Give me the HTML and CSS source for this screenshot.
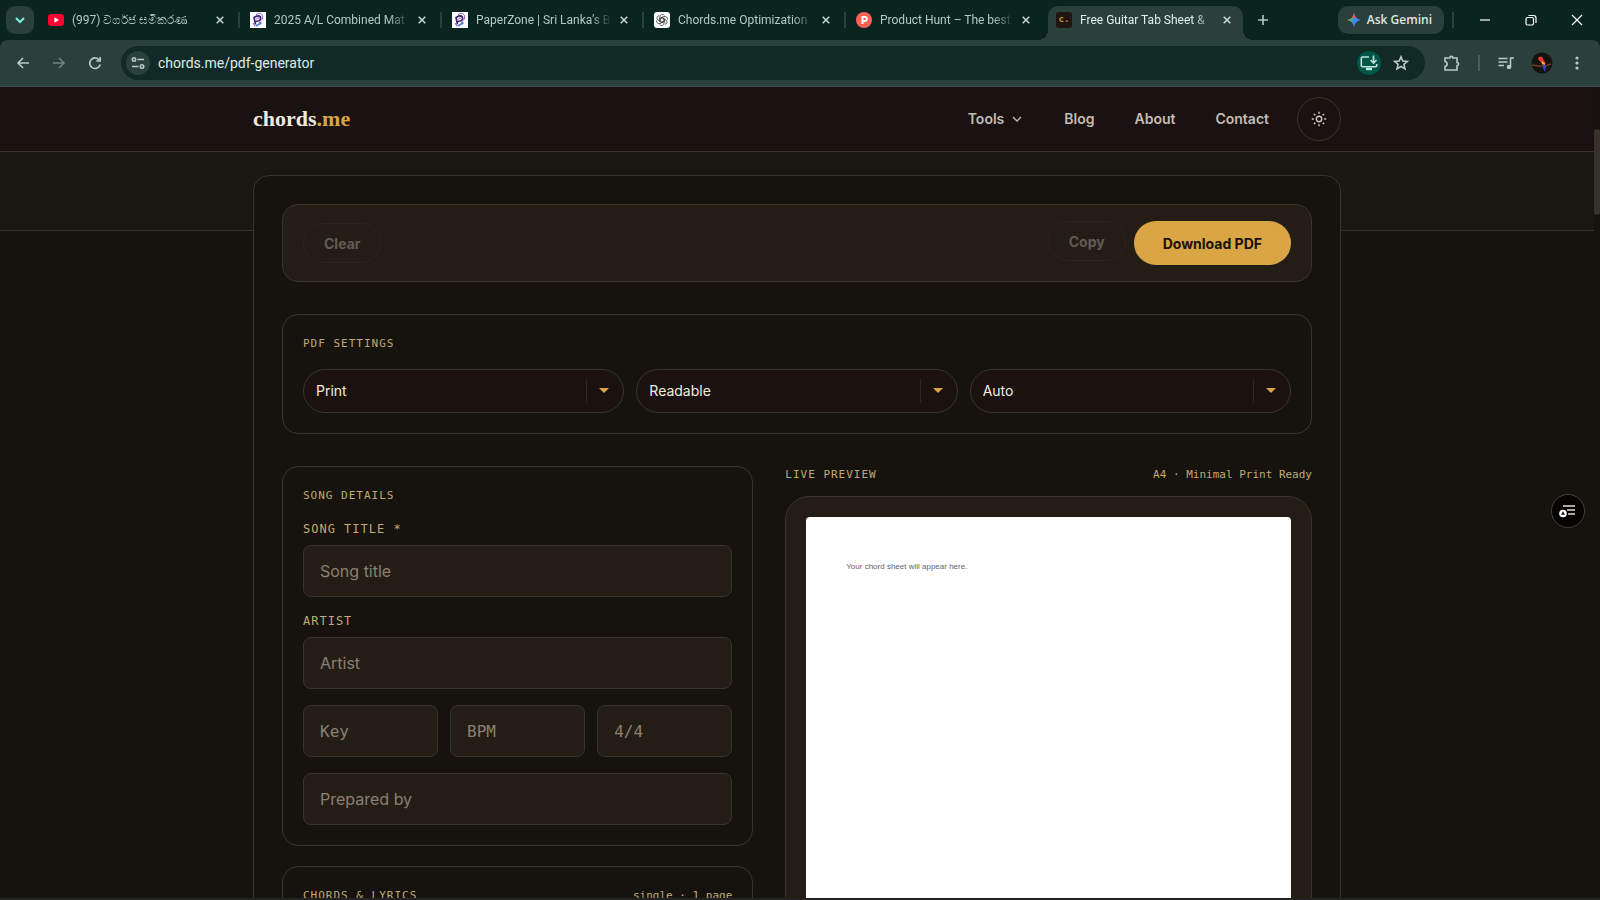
FILE: index.html
```html
<!DOCTYPE html>
<html lang="en">
<head>
<meta charset="utf-8">
<meta name="viewport" content="width=device-width, initial-scale=1">
<title>Free Guitar Tab Sheet &amp; PDF Generator</title>
<link rel="stylesheet" href="styles.css">
</head>
<body>
<div class="browser">
  <div class="tab-strip">
    <button class="tab-search" aria-label="Search tabs"><svg width="12" height="12" viewBox="0 0 12 12"><path d="M2 4l4 4 4-4" fill="none" stroke="#7ff0de" stroke-width="2"/></svg></button>
    <div class="tabs">
      <div class="tab">
        <svg class="favicon" viewBox="0 0 16 16"><rect y="2" width="16" height="12" rx="3" fill="#ff0033"/><path d="M6.4 5.3v5.4L11 8z" fill="#fff"/></svg>
        <span class="tab-title">(997) වර්ගජ සමීකරණ</span>
        <button class="tab-close" aria-label="Close tab"><svg width="8" height="8" viewBox="0 0 8 8"><path d="M.7.7l6.6 6.6M7.3.7L.7 7.3"/></svg></button>
      </div>
      <div class="tab">
        <svg class="favicon" viewBox="0 0 16 16"><rect width="16" height="16" fill="#fff"/><path d="M5.500 12.500L4 5.600c3-2.600 6.500-2.200 6.600.6.1 2.200-2.200 3.200-4.800 3.100" fill="none" stroke="#3a2478" stroke-width="1.700"/><path d="M6 2.800c3-3 7.500-1 6.500 3.400-.5 2-2 3-3 3.600l1 2.500M6 7.500c1-1.500 2-1.700 3-1.300M3 11l2 3.500" fill="none" stroke="#8a4fc0"/><path d="M6 14l5.500-3.500" stroke="#4a7fe8" stroke-width="1.800"/></svg>
        <span class="tab-title">2025 A/L Combined Mat</span>
        <button class="tab-close" aria-label="Close tab"><svg width="8" height="8" viewBox="0 0 8 8"><path d="M.7.7l6.6 6.6M7.3.7L.7 7.3"/></svg></button>
      </div>
      <div class="tab">
        <svg class="favicon" viewBox="0 0 16 16"><rect width="16" height="16" fill="#fff"/><path d="M5.500 12.500L4 5.600c3-2.600 6.500-2.200 6.600.6.1 2.200-2.200 3.200-4.800 3.100" fill="none" stroke="#3a2478" stroke-width="1.700"/><path d="M6 2.800c3-3 7.500-1 6.500 3.400-.5 2-2 3-3 3.600l1 2.500M6 7.500c1-1.500 2-1.700 3-1.300M3 11l2 3.500" fill="none" stroke="#8a4fc0"/><path d="M6 14l5.500-3.500" stroke="#4a7fe8" stroke-width="1.800"/></svg>
        <span class="tab-title">PaperZone | Sri Lanka’s B</span>
        <button class="tab-close" aria-label="Close tab"><svg width="8" height="8" viewBox="0 0 8 8"><path d="M.7.7l6.6 6.6M7.3.7L.7 7.3"/></svg></button>
      </div>
      <div class="tab">
        <svg class="favicon" viewBox="0 0 16 16"><rect width="16" height="16" rx="3" fill="#fff"/><g fill="none" stroke="#444" stroke-width=".8"><path id="petal" d="M6 8.900V4.800a2.400 2.400 0 0 1 4.300-1.500M6 6.700l2-1.200 3.500 2"/><use href="#petal" transform="rotate(60 8 8)"/><use href="#petal" transform="rotate(120 8 8)"/><use href="#petal" transform="rotate(180 8 8)"/><use href="#petal" transform="rotate(240 8 8)"/><use href="#petal" transform="rotate(300 8 8)"/></g></svg>
        <span class="tab-title">Chords.me Optimization</span>
        <button class="tab-close" aria-label="Close tab"><svg width="8" height="8" viewBox="0 0 8 8"><path d="M.7.7l6.6 6.6M7.3.7L.7 7.3"/></svg></button>
      </div>
      <div class="tab tab-before-active">
        <svg class="favicon" viewBox="0 0 16 16"><circle cx="8" cy="8" r="8" fill="#ff6154"/><path d="M6.500 12V4.900h2.300a2.050 2.050 0 0 1 0 4.100H6.500" fill="none" stroke="#fff" stroke-width="1.900"/></svg>
        <span class="tab-title">Product Hunt – The best</span>
        <button class="tab-close" aria-label="Close tab"><svg width="8" height="8" viewBox="0 0 8 8"><path d="M.7.7l6.6 6.6M7.3.7L.7 7.3"/></svg></button>
      </div>
      <div class="tab tab-active">
        <span class="favicon favicon-chords">c.</span>
        <span class="tab-title">Free Guitar Tab Sheet &amp;</span>
        <button class="tab-close" aria-label="Close tab"><svg width="8" height="8" viewBox="0 0 8 8"><path d="M.7.7l6.6 6.6M7.3.7L.7 7.3"/></svg></button>
      </div>
      <button class="new-tab" aria-label="New tab"><svg width="12" height="12" viewBox="0 0 12 12"><path d="M6 1v10M1 6h10" stroke="#b5c9c3" stroke-width="1.600"/></svg></button>
    </div>
    <button class="gemini"><svg width="16" height="16" viewBox="0 0 16 16"><defs><linearGradient id="gem" x1="0" y1=".4" x2="1" y2=".6"><stop offset="0" stop-color="#f9c325"/><stop offset=".25" stop-color="#5cb865"/><stop offset=".5" stop-color="#3f86f6"/><stop offset="1" stop-color="#4c8df6"/></linearGradient></defs><path d="M8 1c.8 4 3 6.200 7 7-4 .8-6.200 3-7 7-.8-4-3-6.200-7-7 4-.8 6.200-3 7-7z" fill="url(#gem)"/><path d="M8 1c.5 2.500 1.500 4.200 3 5.300L7 6 6 5.800C7 4.600 7.600 3 8 1z" fill="#f0524a"/></svg>Ask Gemini</button>
    <span class="strip-divider"></span>
    <div class="window-controls">
      <button aria-label="Minimize"><svg width="12" height="12" viewBox="0 0 12 12"><path d="M1 6h10"/></svg></button>
      <button aria-label="Restore"><svg width="12" height="12" viewBox="0 0 12 12"><rect x="1" y="3.500" width="7.500" height="7.500" rx="1.500"/><path d="M3.500 1.500h5a2.500 2.500 0 0 1 2.500 2.500v5"/></svg></button>
      <button aria-label="Close"><svg width="12" height="12" viewBox="0 0 12 12"><path d="M1 1l10 10M11 1L1 11"/></svg></button>
    </div>
  </div>

  <div class="toolbar">
    <div class="nav-buttons">
      <button aria-label="Back"><svg width="16" height="16" viewBox="0 0 16 16"><path d="M14 8H3M8 3L3 8l5 5"/></svg></button>
      <button class="disabled" aria-label="Forward"><svg width="16" height="16" viewBox="0 0 16 16"><path d="M2 8h11M8 3l5 5-5 5"/></svg></button>
      <button aria-label="Reload"><svg width="16" height="16" viewBox="0 0 16 16"><path d="M13.200 9.500A5.300 5.300 0 1 1 12.300 5M13.200 2v4H9.200"/></svg></button>
    </div>
    <div class="address">
      <button class="round site-info" aria-label="Site information"><svg width="14" height="14" viewBox="0 0 14 14"><path d="M6.500 3.500H13M1 10.500h6.500"/><circle cx="3" cy="3.500" r="1.700"/><circle cx="11" cy="10.500" r="1.700"/></svg></button>
      <input class="url" type="text" value="chords.me/pdf-generator" aria-label="Address">
      <button class="round install" aria-label="Install app"><svg width="18" height="18" viewBox="0 0 18 18"><path d="M9 3H2.500A1.200 1.200 0 0 0 1.300 4.200v7.300a1.200 1.200 0 0 0 1.200 1.200h13a1.200 1.200 0 0 0 1.200-1.200V10M13.500 1.500v7M10.500 6l3 3 3-3"/><path d="M6 15h6" stroke-width="2.500"/></svg></button>
      <button class="round" aria-label="Bookmark"><svg width="16" height="16" viewBox="0 0 16 16"><path d="M8 1.800l1.800 4.200 4.600.4-3.500 3 1.100 4.500L8 11.500l-4 2.400 1.100-4.500-3.500-3 4.600-.4z"/></svg></button>
    </div>
    <div class="extensions">
      <button aria-label="Extensions"><svg width="18" height="18" viewBox="0 0 18 18"><path d="M2 4h4.800a1.600 1.600 0 0 1 3.200 0H14v4.500a1.600 1.600 0 0 1 0 3.200V16H2v-3.800a2.200 2.200 0 0 0 0-4.400z"/></svg></button>
      <span class="strip-divider"></span>
      <button aria-label="Media controls"><svg width="18" height="18" viewBox="0 0 18 18"><path d="M1.500 4.500h9M1.500 8h9M1.500 11.500h5.500M13.500 13V4h3.500"/><circle cx="12" cy="13" r="1.500" fill="currentColor"/></svg></button>
      <button aria-label="Profile"><svg width="22" height="22" viewBox="0 0 22 22"><circle cx="11" cy="11" r="10.500" fill="#15130f" stroke="none"/><path d="M1 13l7 1 6 0 6-2" stroke="#6b3b22" stroke-width="1.600"/><path d="M7 7c1-3.500 5-3 5 0l2.500 4-1 3-4-4z" fill="#e8392e" stroke="none"/><path d="M10.500 9l3 2v3l-2.500-2z" fill="#f2b91e" stroke="none"/><path d="M12 12l3 2-1 6-2-4z" fill="#3448d8" stroke="none"/></svg></button>
      <button aria-label="Menu"><svg width="16" height="16" viewBox="0 0 16 16"><g fill="currentColor" stroke="none"><circle cx="8" cy="3" r="1.600"/><circle cx="8" cy="8" r="1.600"/><circle cx="8" cy="13" r="1.600"/></g></svg></button>
    </div>
  </div>

  <div class="viewport">
    <div class="page">
      <header class="site-header">
        <div class="container header-inner">
          <a class="logo" href="#">chords<span>.me</span></a>
          <nav class="site-nav">
            <a href="#">Tools <svg width="14" height="14" viewBox="0 0 14 14"><path d="M3 5l4 4 4-4" fill="none" stroke="currentColor" stroke-width="1.300"/></svg></a>
            <a href="#">Blog</a>
            <a href="#">About</a>
            <a href="#">Contact</a>
          </nav>
          <button class="theme" aria-label="Toggle theme"><svg width="16" height="16" viewBox="0 0 16 16" fill="none" stroke="currentColor" stroke-width="1.400"><circle cx="8" cy="8" r="2.700"/><path d="M8 .8v2M8 13.200v2M.8 8h2M13.200 8h2M2.900 2.900l1.400 1.400M11.700 11.700l1.400 1.400M2.900 13.100l1.400-1.400M11.700 4.300l1.400-1.400"/></svg></button>
        </div>
      </header>
      <div class="hero"></div>
      <main class="container">
        <div class="workspace">
          <section class="actions">
            <button class="btn-ghost" disabled>Clear</button>
            <div class="actions-end">
              <button class="btn-ghost" disabled>Copy</button>
              <button class="btn-primary">Download PDF</button>
            </div>
          </section>

          <section class="panel">
            <h2 class="eyebrow">PDF Settings</h2>
            <div class="settings">
              <div class="select"><select aria-label="Style"><option>Print</option></select></div>
              <div class="select"><select aria-label="Size"><option>Readable</option></select></div>
              <div class="select"><select aria-label="Columns"><option>Auto</option></select></div>
            </div>
          </section>

          <div class="columns">
            <div class="editor">
              <section class="panel">
                <h2 class="eyebrow">Song Details</h2>
                <div class="fields">
                  <div class="field"><label for="title">Song Title *</label><input id="title" type="text" placeholder="Song title"></div>
                  <div class="field"><label for="artist">Artist</label><input id="artist" type="text" placeholder="Artist"></div>
                  <div class="triple">
                    <input type="text" placeholder="Key" aria-label="Key">
                    <input type="text" placeholder="BPM" aria-label="BPM">
                    <input type="text" placeholder="4/4" aria-label="Time signature">
                  </div>
                  <input type="text" placeholder="Prepared by" aria-label="Prepared by">
                </div>
              </section>
              <section class="panel lyrics">
                <div class="heading-row"><h2 class="eyebrow">Chords &amp; Lyrics</h2><span class="meta">single · 1 page</span></div>
              </section>
            </div>
            <section class="preview">
              <div class="heading-row"><h2 class="eyebrow">Live Preview</h2><span class="meta">A4 · Minimal Print Ready</span></div>
              <div class="preview-frame"><div class="paper"><p>Your chord sheet will appear here.</p></div></div>
            </section>
          </div>
        </div>
      </main>
    </div>
    <div class="scrollbar"><div class="thumb"></div></div>
    <button class="assistant" aria-label="Reading assistant"><svg width="18" height="16" viewBox="0 0 18 16"><path d="M4 3h12M8 7h8M9 11h7" stroke="#ddd" stroke-width="1.600"/><circle cx="4" cy="10.500" r="3.800" fill="#fff"/><path d="M4 8.300l2 3.400H2z" fill="#111"/></svg></button>
  </div>
  <div class="window-edge"></div>
</div>
</body>
</html>
```

FILE: styles.css
```css
* { box-sizing: border-box; }

:root {
  --strip: #0a2420;
  --chrome: #29403b;
  --chrome-text: #b5c9c3;
  --line: #38332c;
  --surface: #241d16;
  --gold: #d9a545;
  --sans: Inter, "Liberation Sans", sans-serif;
  --mono: "DejaVu Sans Mono", "Liberation Mono", monospace;
  --ui: "Open Sans", "Noto Sans", sans-serif;
}

body { margin: 0; background: #16120e; font-family: var(--sans); }
button { border: 0; padding: 0; background: none; color: inherit; font: inherit; }
a { color: inherit; text-decoration: none; }
h2, p { margin: 0; }
svg { display: block; flex: none; }

.browser { display: flex; flex-direction: column; height: 100vh; overflow: hidden; }

/* Tab strip */
.tab-strip { display: flex; align-items: center; height: 40px; flex: none; padding: 0 0 0 6px; background: var(--strip); color: var(--chrome-text); font: 12px/16px var(--ui); }
.tab-search { display: grid; place-items: center; width: 28px; height: 28px; border-radius: 9px; background: var(--chrome); }
.tabs { display: flex; flex: 1; align-self: stretch; align-items: flex-end; margin-left: 6px; min-width: 0; }
.tab { position: relative; display: flex; align-items: center; flex: 0 1 202px; min-width: 0; height: 34px; padding: 0 14px 6px 8px; }
.tab::after { content: ""; position: absolute; right: 2px; top: 6px; width: 2px; height: 16px; background: var(--chrome); }
.tab-before-active { flex-basis: 200px; }
.tab-before-active::after { display: none; }
.favicon { width: 16px; height: 16px; flex: none; }
.favicon-chords { border-radius: 3px; background: #201512; color: #c98f2c; font: bold 9px/15px var(--mono); text-align: center; }
.tab-title { flex: 1; margin: 0 4px 0 8px; overflow: hidden; white-space: nowrap; font-family: Roboto, "Noto Sans", sans-serif; line-height: 18px; -webkit-mask-image: linear-gradient(90deg, #000 84%, transparent); mask-image: linear-gradient(90deg, #000 84%, transparent); }
.tab-close { display: grid; place-items: center; width: 16px; height: 16px; }
.tab-close svg { fill: none; stroke: #c9dad5; stroke-width: 1.5; }
.tab-active { flex-basis: 195px; padding-right: 8px; border-radius: 10px 10px 0 0; background: var(--chrome); color: #e3efeb; }
.tab-active::before, .tab-active::after { content: ""; position: absolute; top: auto; bottom: 0; width: 10px; height: 10px; }
.tab-active::before { left: -10px; background: radial-gradient(circle at 0 0, transparent 10px, var(--chrome) 10px); }
.tab-active::after { right: -10px; background: radial-gradient(circle at 100% 0, transparent 10px, var(--chrome) 10px); }
.new-tab { display: grid; place-items: center; width: 28px; height: 28px; margin: 0 0 6px 6px; }
.gemini { display: flex; align-items: center; gap: 5px; height: 28px; padding: 0 12px 0 8px; border-radius: 10px; background: var(--chrome); color: #dbe8e4; font-weight: 600; white-space: nowrap; }
.strip-divider { width: 2px; height: 16px; margin: 0 8px; background: var(--chrome); }
.window-controls { display: flex; }
.window-controls button { display: grid; place-items: center; width: 46px; height: 40px; }
.window-controls svg { fill: none; stroke: #fff; stroke-width: 1.2; }

/* Toolbar */
.toolbar { display: flex; align-items: center; flex: none; height: 47px; padding: 0 15px; border-bottom: 1px solid #3c524e; border-radius: 8px 8px 0 0; background: var(--chrome); box-shadow: 0 -8px 0 0 var(--strip); color: #b9cbc6; }
.tab-strip { position: relative; }
.toolbar svg { fill: none; stroke: currentColor; stroke-width: 1.6; }
.nav-buttons { display: flex; gap: 20px; }
.nav-buttons .disabled { color: #6f857f; }
.address { display: flex; align-items: center; flex: 1; gap: 8px; height: 34px; margin: 0 18px; padding: 0 12px 0 5px; border-radius: 17px; background: #122a26; }
.round { display: grid; place-items: center; width: 24px; height: 24px; border-radius: 50%; }
.site-info { background: var(--chrome); }
.install { background: #005448; color: #bfe3dc; }
.url { flex: 1; min-width: 0; padding: 0; border: 0; background: none; color: #dfeae7; font: 14px/20px Roboto, "Noto Sans", sans-serif; outline: 0; }
.extensions { display: flex; align-items: center; gap: 9px; }
.extensions .strip-divider { margin: 0 8px; background: #45605a; }
.extensions button + button { margin-left: 7px; }

/* Page */
.viewport { position: relative; display: flex; flex: 1; min-height: 0; overflow: hidden; }
.page { flex: 1; min-width: 0; }
.container { max-width: 1088px; margin: 0 auto; }
.site-header { border-bottom: 1px solid var(--line); background: #1a1210; }
.header-inner { display: flex; align-items: center; height: 64px; }
.logo { margin-right: auto; color: #efe8dc; font: bold 22px/28px "Liberation Serif", serif; }
.logo span { color: var(--gold); }
.site-nav { display: flex; gap: 40px; margin-right: 28px; color: #c4bcb3; font-size: 14px; font-weight: 600; line-height: 20px; }
.site-nav a { display: flex; align-items: center; gap: 6px; }
.theme { display: grid; place-items: center; width: 44px; height: 44px; border: 1px solid var(--line); border-radius: 50%; color: #d6cfc6; }
.hero { height: 79px; border-bottom: 1px solid var(--line); background: #1a1611; }
.workspace { position: relative; display: flex; flex-direction: column; gap: 32px; margin-top: -56px; padding: 28px; border: 1px solid var(--line); border-radius: 16px; background: #16120e; }

.actions { display: flex; align-items: center; justify-content: space-between; padding: 16px 20px; border: 1px solid var(--line); border-radius: 16px; background: var(--surface); }
.actions-end { display: flex; align-items: flex-start; gap: 8px; }
.btn-ghost { height: 40px; padding: 0 20px; border: 1px solid #2b251e; border-radius: 20px; color: #625b53; font-size: 14px; font-weight: 700; }
.btn-primary { height: 44px; padding: 0 29px; border-radius: 22px; background: var(--gold); color: #1a120b; font-size: 14px; font-weight: 700; }

.panel { padding: 20px; border: 1px solid var(--line); border-radius: 16px; }
.eyebrow { margin-bottom: 16px; color: #c0aa75; font: 11px/18px var(--mono); letter-spacing: 1px; text-transform: uppercase; }
.meta { color: #c0aa75; font: 11px/18px var(--mono); }
.heading-row { display: flex; justify-content: space-between; }
.settings { display: grid; grid-template-columns: repeat(3, 1fr); gap: 12px; }
.select { position: relative; }
.select select { display: block; width: 100%; height: 44px; padding: 0 48px 0 12px; border: 1px solid var(--line); border-radius: 22px; appearance: none; background: #1b120f; color: #f3ecdf; font: 14px/20px var(--sans); }
.select::before { content: ""; position: absolute; right: 37px; top: 10px; width: 1px; height: 24px; background: #2e2823; }
.select::after { content: ""; position: absolute; right: 15px; top: 19px; border: 5px solid transparent; border-top-color: var(--gold); border-bottom: 0; }

.columns { display: grid; grid-template-columns: 17fr 19fr; gap: 32px; }
.editor { display: flex; flex-direction: column; gap: 20px; min-width: 0; }
.fields { display: grid; gap: 16px; }
.field { display: grid; gap: 8px; }
.field label { color: #c0aa75; font: 12px/16px var(--mono); letter-spacing: 1px; text-transform: uppercase; }
.fields input { width: 100%; min-width: 0; height: 52px; padding: 0 16px; border: 1px solid var(--line); border-radius: 8px; background: var(--surface); color: #f3ecdf; font: 16px/24px var(--sans); }
.fields input::placeholder { color: #8a8072; opacity: 1; }
.fields .triple input { font-family: var(--mono); }
.triple { display: grid; grid-template-columns: repeat(3, 1fr); gap: 12px; }
.lyrics { min-height: 480px; }
.preview { display: flex; flex-direction: column; }
.preview .eyebrow { margin-bottom: 12px; }
.preview-frame { flex: 1; padding: 20px; border: 1px solid var(--line); border-radius: 24px; background: var(--surface); }
.paper { aspect-ratio: 210 / 297; padding: 40px; border-radius: 4px; background: #fff; color: #666; font: 8px/20px "Liberation Sans", Arial, sans-serif; }

.scrollbar { width: 6px; flex: none; padding-top: 42px; }
.thumb { height: 86px; border-radius: 3px; background: #38322a; }
.assistant { position: absolute; right: 15px; top: 407px; display: grid; place-items: center; width: 34px; height: 34px; border: 1px solid #443f3a; border-radius: 50%; background: #050403; }
.window-edge { height: 2px; flex: none; background: #232324; }
```
